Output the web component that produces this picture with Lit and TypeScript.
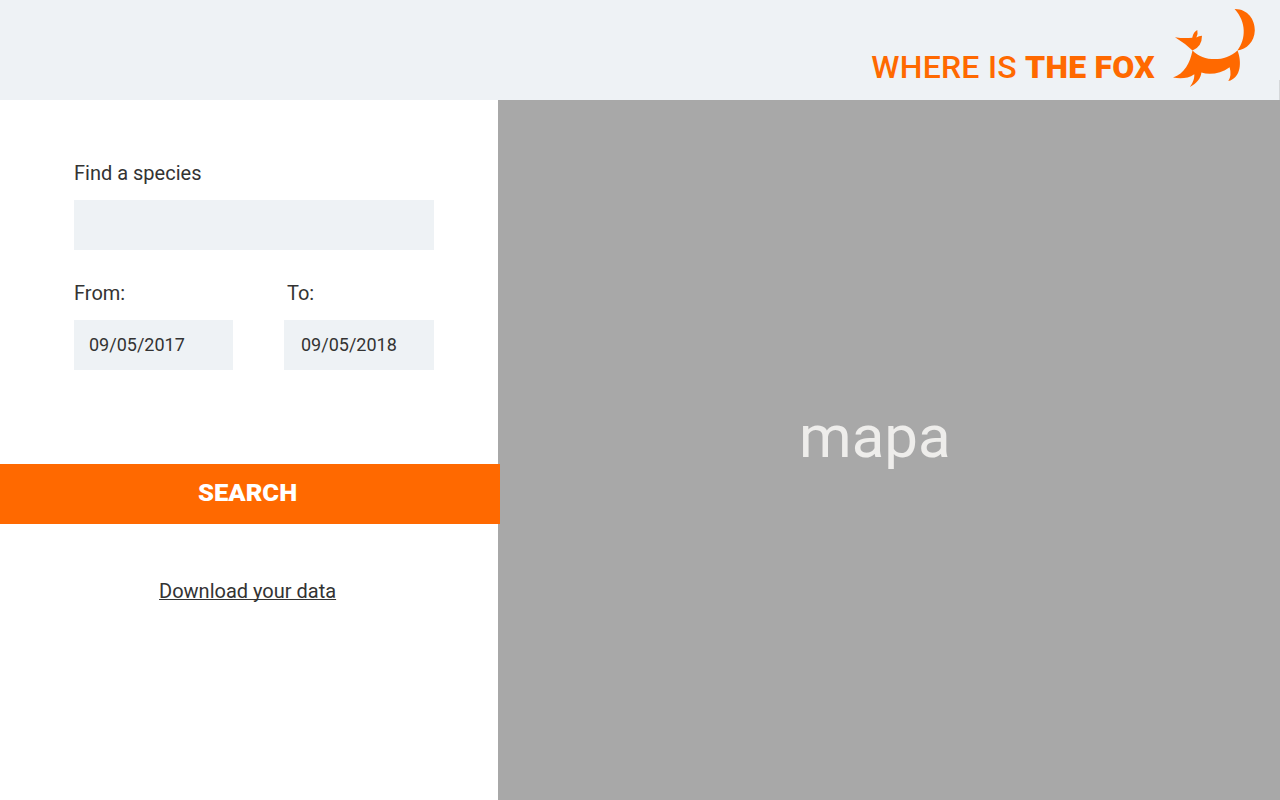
import { LitElement, html, css } from "lit";
import { customElement } from "lit/decorators.js";

@customElement("app-root")
export class AppRoot extends LitElement {
  static styles = css`
    :host {
      display: grid;
      grid-template-columns: 497.7px 1fr;
      grid-template-rows: 100px 1fr;
      width: 1280px;
      height: 800px;
      overflow: hidden;
      background: #fff;
      color: #333;
      font-family: Roboto, sans-serif;
      font-size: 20px;
      line-height: 24px;
    }
    .header {
      grid-column: 1 / -1;
      display: flex;
      justify-content: flex-end;
      background: #eef2f5;
      color: #ff6900;
    }
    .title {
      margin: 48px 10px 0 0;
      font-size: 32px;
      font-weight: 500;
      line-height: 38px;
      letter-spacing: 0.25px;
      white-space: nowrap;
    }
    .title b {
      font-weight: 900;
    }
    .fox {
      display: block;
      width: 114px;
      height: 100px;
      fill: currentColor;
    }
    .edge {
      align-self: flex-end;
      width: 1px;
      height: 20px;
      background: #d5d8da;
    }
    .panel {
      display: flex;
      flex-direction: column;
    }
    .fields {
      display: grid;
      grid-template-columns: 158.6px 150px;
      column-gap: 51.4px;
      padding: 61px 0 0 74px;
    }
    .wide {
      grid-column: 1 / -1;
    }
    .field {
      display: flex;
      flex-direction: column;
      gap: 15px;
      margin-bottom: 31px;
    }
    .indent {
      padding-left: 3px;
    }
    .input {
      box-sizing: border-box;
      width: 100%;
      height: 50px;
      padding: 0 15px;
      border: 0;
      border-radius: 0;
      outline: 0;
      background: #eef2f5;
      color: #333;
      font: 18px/50px Roboto, sans-serif;
    }
    .input.to {
      padding-left: 17px;
    }
    .search {
      position: relative;
      width: 500px;
      height: 60px;
      margin-top: 63px;
      padding: 0 5px 1px 0;
      border: 0;
      background: #ff6900;
      color: #fff;
      font: 900 24px/59px Roboto, sans-serif;
    }
    .search span {
      display: inline-block;
      transform: scaleX(1.065);
    }
    .download {
      align-self: center;
      margin: 55px 2.5px 0 0;
      color: inherit;
      text-decoration: underline;
      text-decoration-skip-ink: none;
      text-decoration-thickness: 1px;
      text-underline-offset: 1px;
    }
    .map {
      display: flex;
      justify-content: center;
      padding-right: 28px;
      background: #a8a8a8;
      color: #eeedeb;
      font-size: 60px;
      line-height: 72px;
    }
    .maplabel {
      margin-top: 301px;
    }
  `;

  render() {
    return html`
      <header class="header">
        <h1 class="title">WHERE IS <b>THE FOX</b></h1>
        <svg class="fox" viewBox="0 0 114 100" aria-hidden="true">
          <path d="M10 37.2Q19 38.6 27.2 37.7Q28.5 31.8 32.3 30Q33.2 33.5 31.4 37.6Q33.8 35.8 37 35.7Q37 46.5 27.5 50.6Q20 43.2 10 37.2Z" />
          <path d="M27.5 50.4C38 61.5 60 62.5 72.5 50.4C76.8 61 76.5 78 63.3 81Q67 75.5 64.6 67.2C56 73.5 45 75.4 36.4 72.6C35.7 78.5 32 83.5 24.8 87C28.5 82 29.4 78 29.3 74.2C23 78.5 16 79 8 77.6C19.5 73.5 25 63 27.5 50.4Z" />
          <path d="M69.6 9C83 8.8 90 20 89.8 30.5C89.5 42 81.5 49.3 72.4 50.6C81.2 39 81.5 22 69.6 9Z" />
        </svg>
        <span class="edge"></span>
      </header>
      <main class="panel">
        <div class="fields">
          <label class="field wide">
            <span>Find a species</span>
            <input class="input" type="text" />
          </label>
          <label class="field">
            <span>From:</span>
            <input class="input" type="text" value="09/05/2017" />
          </label>
          <label class="field">
            <span class="indent">To:</span>
            <input class="input to" type="text" value="09/05/2018" />
          </label>
        </div>
        <button class="search"><span>SEARCH</span></button>
        <a class="download" href="#">Download your data</a>
      </main>
      <section class="map"><span class="maplabel">mapa</span></section>
    `;
  }
}
